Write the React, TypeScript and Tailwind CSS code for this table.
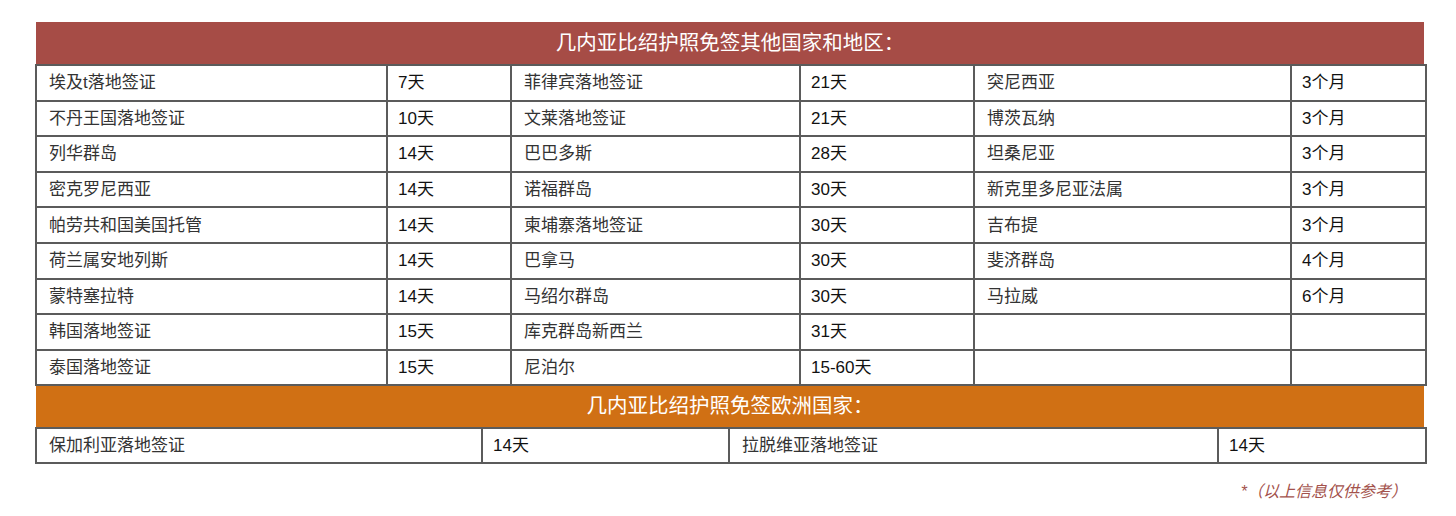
import React from 'react';

const others: string[][] = [
  ['埃及t落地签证', '7天', '菲律宾落地签证', '21天', '突尼西亚', '3个月'],
  ['不丹王国落地签证', '10天', '文莱落地签证', '21天', '博茨瓦纳', '3个月'],
  ['列华群岛', '14天', '巴巴多斯', '28天', '坦桑尼亚', '3个月'],
  ['密克罗尼西亚', '14天', '诺福群岛', '30天', '新克里多尼亚法属', '3个月'],
  ['帕劳共和国美国托管', '14天', '柬埔寨落地签证', '30天', '吉布提', '3个月'],
  ['荷兰属安地列斯', '14天', '巴拿马', '30天', '斐济群岛', '4个月'],
  ['蒙特塞拉特', '14天', '马绍尔群岛', '30天', '马拉威', '6个月'],
  ['韩国落地签证', '15天', '库克群岛新西兰', '31天', '', ''],
  ['泰国落地签证', '15天', '尼泊尔', '15-60天', '', ''],
];

const europe: string[] = ['保加利亚落地签证', '14天', '拉脱维亚落地签证', '14天'];

const font = "font-['Liberation_Sans','Noto_Sans_CJK_SC',sans-serif]";

const App: React.FC = () => {
  return (
    <div className={`w-[1456px] h-[516px] bg-white pt-[22px] pl-[35px] ${font}`}>
      <div className="w-[1390px]">
        <div className="h-[42px] ml-px mr-px bg-[#a64c46] flex items-center justify-center text-white text-[20.5px]">
          几内亚比绍护照免签其他国家和地区：
        </div>
        <table className="w-full table-fixed border-collapse text-[17px] text-[#333]">
          <colgroup>
            <col className="w-[351px]" />
            <col className="w-[124px]" />
            <col className="w-[289px]" />
            <col className="w-[174px]" />
            <col className="w-[317px]" />
            <col className="w-[135px]" />
          </colgroup>
          <tbody>
            {others.map((row, i) => (
              <tr key={i} className="h-[35.6px]">
                {row.map((c, j) => (
                  <td key={j} className={`border-2 border-[#5b5b5b] ${j % 2 === 0 ? 'pl-[12px]' : 'pl-[10px] text-[#111]'} leading-none`}>
                    {c}
                  </td>
                ))}
              </tr>
            ))}
          </tbody>
        </table>
        <div className="h-[41px] ml-px mr-px bg-[#d07014] flex items-center justify-center text-white text-[20.5px]">
          几内亚比绍护照免签欧洲国家：
        </div>
        <table className="w-full table-fixed border-collapse text-[17px] text-[#333]">
          <colgroup>
            <col className="w-[446px]" />
            <col className="w-[247px]" />
            <col className="w-[489px]" />
            <col className="w-[208px]" />
          </colgroup>
          <tbody>
            <tr className="h-[35px]">
              {europe.map((c, j) => (
                <td key={j} className={`border-2 border-[#5b5b5b] ${j % 2 === 0 ? 'pl-[12px]' : 'pl-[10px] text-[#111]'} leading-none`}>
                  {c}
                </td>
              ))}
            </tr>
          </tbody>
        </table>
        <div className="flex justify-end pr-[18px] pt-[16px]">
          <span className="italic text-[16px] text-[#a3524c]">*（以上信息仅供参考）</span>
        </div>
      </div>
    </div>
  );
};

export default App;
